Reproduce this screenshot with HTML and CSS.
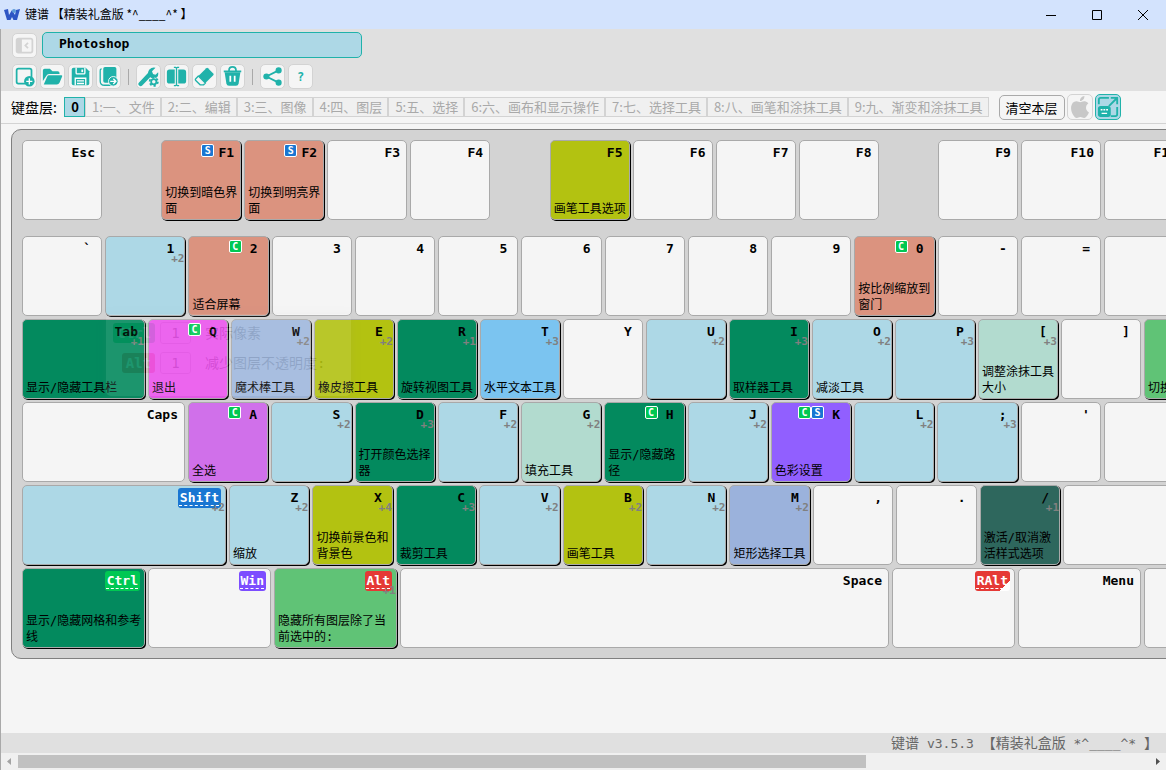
FILE: index.html
```html
<!DOCTYPE html>
<html lang="zh-CN">
<head>
<meta charset="utf-8">
<meta name="viewport" content="width=device-width, initial-scale=1">
<title>键谱</title>
<link rel="stylesheet" href="styles.css">
</head>
<body>
<header class="titlebar">
  <svg class="logo" viewBox="0 0 16 14" aria-hidden="true"><path d="M0 2l4-1 1 6 3-5 3 5 1-5 4-1-3 11H9.500L8 9l-1.500 3H3z" fill="#2d55c4"/><circle cx="10" cy="3" r="2" fill="#5d9bd8"/></svg>
  <span class="window-title">键谱 【精装礼盒版 *^____^* 】</span>
  <div class="window-buttons">
    <button aria-label="最小化"><svg viewBox="0 0 10 10"><path d="M0 5.500h10"/></svg></button>
    <button aria-label="最大化"><svg viewBox="0 0 10 10"><path d="M.5.5h9v9h-9z"/></svg></button>
    <button aria-label="关闭"><svg viewBox="0 0 10 10"><path d="M0 0l10 10M10 0L0 10"/></svg></button>
  </div>
</header>
<div class="app">
  <section class="toolbar">
    <div class="bar">
      <button class="tool collapse" aria-label="收起"><svg viewBox="0 0 24 24"><path fill-rule="evenodd" d="M5 3h14q3 0 3 3v12q0 3-3 3H5q-3 0-3-3V6q0-3 3-3zM9 5v14h10q1 0 1-1V6q0-1-1-1z" fill="#d3d3d3"/><path d="M16 9l-3 3 3 3" fill="none" stroke="#d3d3d3" stroke-width="2"/></svg></button>
      <input class="scheme" type="text" aria-label="方案名称" value="Photoshop">
    </div>
    <div class="bar tools">
      <button class="tool" aria-label="新建"><svg viewBox="0 0 24 24"><path d="M13 20H5q-2 0-2-2V5q0-2 2-2h13q2 0 2 2v8" fill="none" stroke="#20b2aa" stroke-width="2"/><circle cx="17.500" cy="17.500" r="6" fill="#20b2aa"/><path d="M17.500 14v7M14 17.500h7" stroke="#fff" stroke-width="1.500"/></svg></button>
      <button class="tool" aria-label="打开"><svg viewBox="0 0 24 24" fill="#20b2aa"><path d="M1 17V5q0-2 2-2h6l3 3h6q2 0 2 2v1H8q-2 0-3 2z"/><path d="M2 21l4-9q.5-1.500 2-1.500h14q1.500 0 1 1.500l-3 7q-1 2-3 2z"/></svg></button>
      <button class="tool" aria-label="保存"><svg viewBox="0 0 24 24"><path d="M4 2h14l4 4v14q0 2-2 2H4q-2 0-2-2V4q0-2 2-2z" fill="#20b2aa"/><path d="M7 2v6q0 1 1 1h8q1 0 1-1V2M6 22v-8h12v8M8 17h8M8 20h8" fill="none" stroke="#fff" stroke-width="1.500"/><path d="M14 4v3" stroke="#fff" stroke-width="2"/></svg></button>
      <button class="tool" aria-label="导出"><svg viewBox="0 0 24 24"><path d="M8 1h11q2 0 2 2v16H8q-2 0-2-2V3q0-2 2-2z" fill="#20b2aa"/><path d="M4 3Q2 4 2.500 6v11q0 5 5 5H15" fill="none" stroke="#20b2aa" stroke-width="1.500"/><circle cx="17.500" cy="17.500" r="5.500" fill="#20b2aa" stroke="#fff"/><path d="M14 17.500h6m-2.500-3l3 3-3 3" fill="none" stroke="#fff" stroke-width="1.500"/></svg></button>
      <span class="divider"></span>
      <button class="tool" aria-label="设置"><svg viewBox="0 0 24 24"><path d="M3 20.500L14 9" stroke="#20b2aa" stroke-width="5" stroke-linecap="round"/><path d="M20 2l-4 4 1 3 3 1 3-3q1 5-3 7-4 1-7-2-3-4 0-8 3-3 7-2z" fill="#20b2aa"/><circle cx="18" cy="18" r="5" fill="#f5f5f5"/><circle cx="18" cy="18" r="3" fill="none" stroke="#20b2aa" stroke-width="2"/><circle cx="18" cy="18" r="4.700" fill="none" stroke="#20b2aa" stroke-width="2" stroke-dasharray="2.500 2.420"/></svg></button>
      <button class="tool" aria-label="重命名"><svg viewBox="0 0 24 24"><path d="M4 4h6v16H4q-3 0-3-3V7q0-3 3-3zM14 4h6q3 0 3 3v10q0 3-3 3h-6z" fill="#20b2aa"/><path d="M9 1.500h2l1 1 1-1h2M9 22.500h2l1-1 1 1h2M12 2v20" fill="none" stroke="#20b2aa" stroke-width="1.500"/></svg></button>
      <button class="tool" aria-label="擦除"><svg viewBox="0 0 24 24"><path d="M14 2.500q1-1 2 0l6 6q1 1 0 2l-9 9-8-8z" fill="#20b2aa"/><path d="M5 11.500l-3 3q-1 1 0 2l5 5h4l2-2z" fill="none" stroke="#20b2aa" stroke-width="1.500"/></svg></button>
      <button class="tool" aria-label="删除"><svg viewBox="0 0 24 24"><path d="M3 7h18l-2 13q-.5 2.500-3 2.500H8q-2.500 0-3-2.500z" fill="#20b2aa"/><path d="M2 6h20M8 5q0-4 4-4t4 4" fill="none" stroke="#20b2aa" stroke-width="2"/><path d="M9.500 11v7M14.500 11v7" stroke="#fff" stroke-width="2"/></svg></button>
      <span class="divider"></span>
      <button class="tool" aria-label="分享"><svg viewBox="0 0 24 24"><path d="M19 5L5 12l14 7" fill="none" stroke="#20b2aa" stroke-width="2"/><g fill="#20b2aa"><circle cx="19" cy="5" r="3.500"/><circle cx="5" cy="12" r="3.500"/><circle cx="19" cy="19" r="3.500"/></g></svg></button>
      <button class="tool help">?</button>
    </div>
  </section>
  <nav class="layers">
    <span class="layers-label">键盘层:</span>
    <div class="tabs">
      <button class="tab current">0</button><button class="tab">1:一、文件</button><button class="tab">2:二、编辑</button><button class="tab">3:三、图像</button><button class="tab">4:四、图层</button><button class="tab">5:五、选择</button><button class="tab">6:六、画布和显示操作</button><button class="tab">7:七、选择工具</button><button class="tab">8:八、画笔和涂抹工具</button><button class="tab">9:九、渐变和涂抹工具</button>
    </div>
    <button class="clear">清空本层</button>
    <button class="switch" aria-label="苹果键盘"><svg viewBox="0 0 24 24"><path fill="#c8c8c8" d="M12.152 6.896c-.948 0-2.415-1.078-3.960-1.040-2.040.027-3.910 1.183-4.961 3.014-2.117 3.675-.546 9.103 1.519 12.090 1.013 1.454 2.208 3.090 3.792 3.039 1.520-.065 2.090-.987 3.935-.987 1.831 0 2.350.987 3.960.948 1.637-.026 2.676-1.480 3.676-2.948 1.156-1.688 1.636-3.325 1.662-3.415-.039-.013-3.182-1.221-3.220-4.857-.026-3.040 2.480-4.494 2.597-4.559-1.429-2.090-3.623-2.324-4.390-2.376-2-.156-3.675 1.090-4.610 1.090zM15.530 3.830c.843-1.012 1.400-2.427 1.245-3.830-1.207.052-2.662.805-3.532 1.818-.780.896-1.454 2.338-1.273 3.714 1.338.104 2.715-.688 3.559-1.701"/></svg></button>
    <button class="switch on" aria-label="缩放键盘"><svg viewBox="0 0 24 24"><path d="M2 9V4q0-2 2-2h9M22 12v8q0 2-2 2h-5M13 11l8-8M15 2h7v7" fill="none" stroke="#20b2aa" stroke-width="2"/><rect x="1" y="11" width="14" height="12" rx="3" fill="#20b2aa"/><path d="M4 15h2m1 0h2m1 0h2M5 19h6" stroke="#fff" stroke-width="1.500"/></svg></button>
  </nav>
  <main class="stage">
    <div class="board">
      <div class="row fn">
        <button class="key"><b>Esc</b></button><span class="space"></span>
        <button class="key c-salmon"><i class="mods"><em class="s">S</em></i><b>F1</b><span>切换到暗色界面</span></button>
        <button class="key c-salmon"><i class="mods"><em class="s">S</em></i><b>F2</b><span>切换到明亮界面</span></button>
        <button class="key"><b>F3</b></button>
        <button class="key"><b>F4</b></button><span class="space"></span>
        <button class="key c-olive"><b>F5</b><span>画笔工具选项</span></button>
        <button class="key"><b>F6</b></button>
        <button class="key"><b>F7</b></button>
        <button class="key"><b>F8</b></button><span class="space"></span>
        <button class="key"><b>F9</b></button>
        <button class="key"><b>F10</b></button>
        <button class="key"><b>F11</b></button>
        <button class="key"><b>F12</b></button>
      </div>
      <div class="row">
        <button class="key"><b>`</b></button>
        <button class="key c-blue"><b>1</b><small>+2</small></button>
        <button class="key c-salmon"><i class="mods"><em class="c">C</em></i><b>2</b><span>适合屏幕</span></button>
        <button class="key"><b>3</b></button>
        <button class="key"><b>4</b></button>
        <button class="key"><b>5</b></button>
        <button class="key"><b>6</b></button>
        <button class="key"><b>7</b></button>
        <button class="key"><b>8</b></button>
        <button class="key"><b>9</b></button>
        <button class="key c-salmon"><i class="mods"><em class="c">C</em></i><b>0</b><span>按比例缩放到窗门</span></button>
        <button class="key"><b>-</b></button>
        <button class="key"><b>=</b></button>
        <button class="key w-double"><b>Back</b></button>
      </div>
      <div class="row">
        <button class="key w-wide c-green"><b>Tab</b><small>+1</small><span>显示/隐藏工具栏</span></button>
        <button class="key c-magenta"><i class="mods"><em class="c">C</em></i><b>Q</b><span>退出</span></button>
        <button class="key c-slate"><b>W</b><small>+2</small><span>魔术棒工具</span></button>
        <button class="key c-olive"><b>E</b><small>+2</small><span>橡皮擦工具</span></button>
        <button class="key c-green"><b>R</b><small>+1</small><span>旋转视图工具</span></button>
        <button class="key c-sky"><b>T</b><small>+3</small><span>水平文本工具</span></button>
        <button class="key"><b>Y</b></button>
        <button class="key c-blue"><b>U</b><small>+2</small></button>
        <button class="key c-green"><b>I</b><small>+3</small><span>取样器工具</span></button>
        <button class="key c-blue"><b>O</b><small>+2</small><span>减淡工具</span></button>
        <button class="key c-blue"><b>P</b><small>+3</small></button>
        <button class="key c-mint"><b>[</b><small>+3</small><span>调整涂抹工具大小</span></button>
        <button class="key"><b>]</b></button>
        <button class="key w-wide c-leaf"><b>\</b><span>切换</span></button>
        <div class="popup">
          <div class="combo"><em class="c">Ctrl</em><kbd>1</kbd><span>实际像素</span></div>
          <div class="combo"><em class="a">Alt</em><kbd>1</kbd><span>减少图层不透明度:</span></div>
        </div>
      </div>
      <div class="row">
        <button class="key w-double"><b>Caps</b></button>
        <button class="key c-orchid"><i class="mods"><em class="c">C</em></i><b>A</b><span>全选</span></button>
        <button class="key c-blue"><b>S</b><small>+2</small></button>
        <button class="key c-green"><b>D</b><small>+3</small><span>打开颜色选择器</span></button>
        <button class="key c-blue"><b>F</b><small>+2</small></button>
        <button class="key c-mint"><b>G</b><small>+2</small><span>填充工具</span></button>
        <button class="key c-green"><i class="mods"><em class="c">C</em></i><b>H</b><span>显示/隐藏路径</span></button>
        <button class="key c-blue"><b>J</b><small>+2</small></button>
        <button class="key c-violet"><i class="mods"><em class="c">C</em><em class="s">S</em></i><b>K</b><span>色彩设置</span></button>
        <button class="key c-blue"><b>L</b><small>+2</small></button>
        <button class="key c-blue"><b>;</b><small>+3</small></button>
        <button class="key"><b>'</b></button>
        <button class="key w-double"><b>Enter</b></button>
      </div>
      <div class="row">
        <button class="key w-shift c-blue"><b class="cap s">Shift</b><small>+2</small></button>
        <button class="key c-blue"><b>Z</b><small>+2</small><span>缩放</span></button>
        <button class="key c-olive"><b>X</b><small>+4</small><span>切换前景色和背景色</span></button>
        <button class="key c-green"><b>C</b><small>+3</small><span>裁剪工具</span></button>
        <button class="key c-blue"><b>V</b><small>+2</small></button>
        <button class="key c-olive"><b>B</b><small>+2</small><span>画笔工具</span></button>
        <button class="key c-blue"><b>N</b><small>+2</small></button>
        <button class="key c-steel"><b>M</b><small>+2</small><span>矩形选择工具</span></button>
        <button class="key"><b>,</b></button>
        <button class="key"><b>.</b></button>
        <button class="key c-pine"><b>/</b><small>+1</small><span>激活/取消激活样式选项</span></button>
        <button class="key w-shift"><b class="cap s">RShift</b></button>
      </div>
      <div class="row">
        <button class="key w-wide c-green"><b class="cap c">Ctrl</b><span>显示/隐藏网格和参考线</span></button>
        <button class="key w-wide"><b class="cap w">Win</b></button>
        <button class="key w-wide c-leaf"><b class="cap a">Alt</b><small>+1</small><span>隐藏所有图层除了当前选中的:</span></button>
        <button class="key"><b>Space</b></button>
        <button class="key w-wide"><b class="cap a folded">RAlt</b></button>
        <button class="key w-wide"><b>Menu</b></button>
        <button class="key w-wide"><b class="cap c">RCtrl</b></button>
      </div>
    </div>
  </main>
  <footer class="status"><span class="name">键谱</span> v3.5.3 <span class="name">【精装礼盒版</span> *^____^* <span class="name">】</span></footer>
  <div class="scrollbar">
    <button class="arrow" aria-label="向左滚动"><svg viewBox="0 0 17 17"><path d="M10 5v7L6 8.500z" fill="#a3a3a3"/></svg></button>
    <div class="track"><div class="thumb"></div></div>
    <button class="arrow" aria-label="向右滚动"><svg viewBox="0 0 17 17"><path d="M7 5v7l4-3.500z" fill="#505050"/></svg></button>
  </div>
</div>
</body>
</html>
```
FILE: styles.css
```css
* { box-sizing: border-box; }
body {
  margin: 0;
  height: 100vh;
  display: flex;
  flex-direction: column;
  overflow: hidden;
  background: #f5f5f5;
  color: #000;
  font-family: "DejaVu Sans Mono", "Noto Sans CJK SC", monospace;
  font-size: 12px;
}
button, input { font: inherit; color: inherit; margin: 0; padding: 0; }
svg { display: block; }
em, i { font-style: normal; }

.titlebar {
  display: flex;
  align-items: center;
  height: 29px;
  flex: none;
  padding-left: 4px;
  gap: 5px;
  background: #d3e3fd;
  font-family: "Noto Sans CJK SC", sans-serif;
}
.window-title { padding-bottom: 2px; }
.logo { width: 16px; height: 14px; }
.window-buttons { display: flex; margin-left: auto; }
.window-buttons button {
  width: 46px;
  height: 29px;
  display: grid;
  place-items: center;
  border: 0;
  background: none;
}
.window-buttons svg { width: 10px; height: 10px; fill: none; stroke: #000; }

.app {
  flex: 1;
  min-height: 0;
  display: flex;
  flex-direction: column;
  border-left: 1px solid #a9a9a9;
}
.toolbar {
  display: flex;
  flex-direction: column;
  gap: 6px;
  padding: 3px 11px 2px;
  background: #e0e0e0;
}
.bar { display: flex; align-items: center; gap: 5px; }
.tools { gap: 3px; }
.tool {
  width: 25px;
  height: 25px;
  display: grid;
  place-items: center;
  border: 1px solid #d3d3d3;
  border-radius: 5px;
  background: #f5f5f5;
}
.tool svg { width: 21px; height: 21px; }
.help { color: #20b2aa; font-weight: bold; }
.scheme {
  width: 320px;
  height: 26px;
  padding: 0 16px 3px;
  border: 1px solid #20b2aa;
  border-radius: 5px;
  background: #add8e6;
  font-size: 13px;
  font-weight: bold;
}
.divider { width: 1px; height: 16px; margin: 0 4px; background: #a9a9a9; }

.layers {
  display: flex;
  align-items: center;
  height: 33px;
  flex: none;
  padding-left: 10px;
  border-bottom: 1px solid #d3d3d3;
  font-family: "Noto Sans CJK SC", sans-serif;
  font-size: 13px;
  white-space: nowrap;
}
.layers-label { width: 53px; font-size: 14px; }
.tabs { display: flex; }
.tab {
  height: 20px;
  padding: 0 5px 0 6px;
  border: 1px solid #d3d3d3;
  background: #f0f0f0;
  color: #a9a9a9;
  line-height: 16px;
}
.tab.current {
  width: 21px;
  border-color: #20b2aa;
  background: #add8e6;
  color: #000;
  font-weight: bold;
}
.clear {
  height: 25px;
  margin-left: 10px;
  padding: 0 6px;
  border: 1px solid #a9a9a9;
  border-radius: 5px;
  background: #f5f5f5;
}
.switch {
  width: 26px;
  height: 26px;
  margin-left: 2px;
  display: grid;
  place-items: center;
  border: 1px solid #d3d3d3;
  border-radius: 5px;
  background: #f5f5f5;
}
.switch svg { width: 22px; height: 22px; }
.switch.on { border-color: #20b2aa; background: #add8e6; }

.stage { flex: 1; min-height: 0; overflow: hidden; padding: 5px 10px; }
.board {
  width: max-content;
  padding: 10px 300px 10px 10px;
  border: 1px solid #808080;
  border-radius: 10px;
  background: #d3d3d3;
  display: flex;
  flex-direction: column;
  gap: 3px;
}
.row { display: flex; gap: 3px; width: 1245px; position: relative; }
.fn { margin-bottom: 13px; }
.space { flex: 1; }
.key {
  flex: 1 1 0;
  min-width: 0;
  height: 80px;
  position: relative;
  display: flex;
  flex-wrap: wrap;
  justify-content: flex-end;
  align-content: space-between;
  gap: 0 4px;
  padding: 2px 1px 2px 3px;
  border: 1px solid #a9a9a9;
  border-radius: 5px;
  background: #f5f5f5;
  text-align: left;
}
.fn .key { flex: 0 0 80px; }
.key.w-wide { flex: 0 0 123px; }
.key.w-double { flex: 0 0 163px; }
.key.w-shift { flex: 0 0 204px; }
.key[class*="c-"] { box-shadow: 1px 1px 0 #000; }
.key b {
  min-width: 16px;
  height: 20px;
  margin-right: 5px;
  font-size: 13px;
  line-height: 20px;
  text-align: center;
}
.key > span { width: 100%; line-height: 16px; }
.key small {
  position: absolute;
  right: 0;
  top: 15px;
  font-size: 11px;
  line-height: 13px;
  font-weight: bold;
  color: #808080;
}
.mods { display: flex; margin-top: 1px; }
.mods em {
  width: 13px;
  height: 13px;
  border: 1px solid #fff;
  border-radius: 2px;
  color: #fff;
  font-size: 10px;
  font-weight: bold;
  line-height: 11px;
  text-align: center;
}
.s { background: #1976d2; }
.c { background: #00c853; }
.w { background: #7c4dff; }
.a { background: #e53935; }
.key .cap {
  margin-right: 3px;
  padding: 0 2px;
  border-radius: 3px;
  color: #fff;
  text-decoration: underline dashed 1px;
  text-underline-offset: 3px;
}
.key .folded { background: linear-gradient(135deg, #e53935 80%, #fff 80%); }
.c-blue { background: #add8e6; }
.c-salmon { background: #db937f; }
.c-olive { background: #b3c211; }
.c-green { background: #038a5e; }
.c-magenta { background: #ec55ee; }
.c-slate { background: #a0b8de; }
.c-sky { background: #7bc4f0; }
.c-mint { background: #b2dbcf; }
.c-leaf { background: #60c376; }
.c-orchid { background: #d070ea; }
.c-violet { background: #915fff; }
.c-steel { background: #9bb2dc; }
.c-pine { background: #2e675d; }

.popup {
  position: absolute;
  left: 84px;
  top: -5px;
  width: 245px;
  padding: 8px 6px 22px;
  display: grid;
  gap: 8px;
  border-radius: 5px;
  background: #f5f5f5;
  box-shadow: 0 2px 8px #808080;
  opacity: 0.1;
}
.combo { display: grid; grid-template-columns: 43px 31px 1fr; gap: 5px; align-items: center; font-size: 14px; line-height: 20px; }
.combo em { justify-self: end; padding: 0 4px; border-radius: 3px; color: #fff; font-weight: bold; }
.combo kbd { font: inherit; text-align: center; border: 1px solid #a9a9a9; border-radius: 3px; }
.combo span { padding-left: 9px; white-space: nowrap; }

.status {
  height: 20px;
  flex: none;
  padding-right: 8px;
  background: #e0e0e0;
  color: #666;
  font-size: 13px;
  line-height: 20px;
  text-align: right;
}
.status .name { font-size: 14px; }
.scrollbar { display: flex; height: 17px; flex: none; background: #f0f0f0; }
.arrow { width: 17px; height: 17px; border: 0; background: none; }
.track { flex: 1; padding: 2px 0; }
.thumb { width: 75%; height: 13px; background: #c1c1c1; }
```
